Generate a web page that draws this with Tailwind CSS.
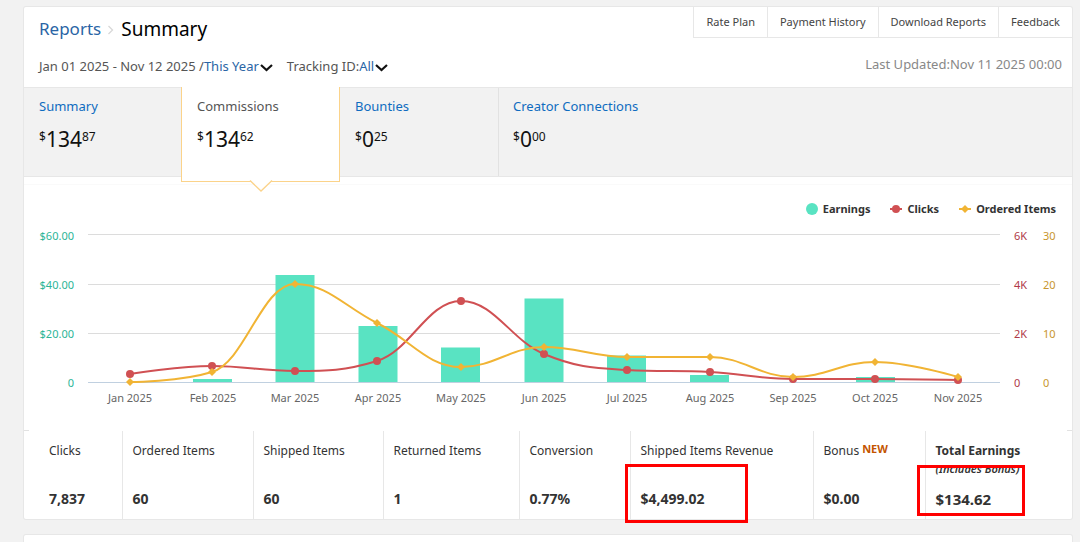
<!DOCTYPE html>
<html lang="en">
<head>
    <meta charset="UTF-8">
    <meta name="viewport" content="width=device-width, initial-scale=1.0">
    <title>Reports - Summary</title>
    <script src="https://cdn.jsdelivr.net/npm/@tailwindcss/browser@4"></script>
</head>
<body class="bg-[#f2f2f2] font-['Noto_Sans','Open_Sans',sans-serif] text-[#444] overflow-x-hidden">
  <main class="ml-6 mr-2 pt-[7px]">
    <div class="bg-white rounded-xs shadow-[0_0_0_1px_#e7e7e7]">

      <!-- Header -->
      <header class="flex justify-between h-20">
        <div class="pl-[15px] pt-2">
          <h1 class="flex items-center h-7">
            <a href="#" class="text-[17px] text-[#2a65a5]">Reports</a>
            <svg class="w-5 h-5" viewBox="0 0 20 20" fill="none" stroke="#d8d8d8" stroke-width="1.3">
              <path d="M7.5 7l4 4l-4 4"></path>
            </svg>
            <span class="text-[19px] text-black">Summary</span>
          </h1>
          <div class="flex items-center h-5 mt-3.5 text-[13px] text-[#555]">
            <span>Jan 01 2025 - Nov 12 2025 /</span>
            <button class="flex items-center text-[#2a65a5]">This Year
              <svg class="w-3.5 h-3.5" viewBox="0 0 14 14" fill="none" stroke="#111" stroke-width="2.2"><path d="M2 5l5.5 5l5.5-5"></path></svg>
            </button>
            <span class="ml-3.5">Tracking ID:</span>
            <button class="flex items-center text-[#2a65a5]">All
              <svg class="w-3.5 h-3.5" viewBox="0 0 14 14" fill="none" stroke="#111" stroke-width="2.2"><path d="M2 5l5.5 5l5.5-5"></path></svg>
            </button>
          </div>
        </div>
        <div class="flex flex-col items-end">
          <nav class="flex h-[31px] border-b border-[#e7e7e7] text-[11px] text-[#444]">
            <a href="#" class="flex items-center px-3 border-l border-[#e7e7e7]">Rate Plan</a>
            <a href="#" class="flex items-center px-3 border-l border-[#e7e7e7]">Payment History</a>
            <a href="#" class="flex items-center px-3 border-l border-[#e7e7e7]">Download Reports</a>
            <a href="#" class="flex items-center px-3 border-l border-[#e7e7e7]">Feedback</a>
          </nav>
          <p class="mt-4 mr-2.5 text-[13px] leading-5 text-[#888]">Last Updated:Nov 11 2025 00:00</p>
        </div>
      </header>

      <!-- Tabs -->
      <div class="flex h-[90px] bg-[#f2f2f2] border-y border-[#e7e7e7] text-[13px]">
        <a href="#" class="w-[157px] pl-[15px] pt-2">
          <p class="leading-5 text-[#0f6cc0]">Summary</p>
          <p class="flex mt-[9px] text-[12px] leading-6 text-[#111]"><span>$</span><span class="text-[21px] leading-7">134</span><span>87</span></p>
        </a>
        <a href="#" class="relative w-[159px] -mt-px h-[95px] pl-[15px] pt-[9px] bg-white border-x border-b border-[#fbd38a]">
          <p class="leading-5 text-[#555]">Commissions</p>
          <p class="flex mt-[9px] text-[12px] leading-6 text-[#111]"><span>$</span><span class="text-[21px] leading-7">134</span><span>62</span></p>
          <svg class="absolute left-[67px] top-[93px] w-6 h-3" viewBox="0 0 24 12" fill="#fff" stroke="#fbd38a" stroke-width="1.3">
            <path d="M1 0.5l11 10.5l11-10.5"></path>
          </svg>
        </a>
        <a href="#" class="w-[159px] pl-[15px] pt-2 border-r border-[#e2e2e2]">
          <p class="leading-5 text-[#0f6cc0]">Bounties</p>
          <p class="flex mt-[9px] text-[12px] leading-6 text-[#111]"><span>$</span><span class="text-[21px] leading-7">0</span><span>25</span></p>
        </a>
        <a href="#" class="pl-3.5 pt-2">
          <p class="leading-5 text-[#0f6cc0]">Creator Connections</p>
          <p class="flex mt-[9px] text-[12px] leading-6 text-[#111]"><span>$</span><span class="text-[21px] leading-7">0</span><span>00</span></p>
        </a>
      </div>

      <!-- Chart -->
      <section class="mt-[7px] pt-3.5 border-t border-[#fafafa]">
        <div class="flex justify-end items-center gap-5 h-5 pr-4 text-[11px] font-bold text-[#333]">
          <span class="flex items-center gap-[5px]"><svg class="w-3 h-3" viewBox="0 0 12 12"><circle cx="6" cy="6" r="6" fill="#59e3c2"></circle></svg>Earnings</span>
          <span class="flex items-center gap-[5px]"><svg class="w-3 h-3" viewBox="0 0 12 12"><path d="M0 6h12" stroke="#d05053" stroke-width="2"></path><circle cx="6" cy="6" r="4" fill="#d05053"></circle></svg>Clicks</span>
          <span class="flex items-center gap-[5px]"><svg class="w-3 h-3" viewBox="0 0 12 12"><path d="M0 6h12" stroke="#f1b434" stroke-width="2"></path><path d="M6 2l4 4l-4 4l-4-4z" fill="#f1b434"></path></svg>Ordered Items</span>
        </div>
        <svg class="block w-full" viewBox="0 0 1048 211" font-size="11">
          <g stroke="#dcdcdc">
            <path d="M64 15.5h912M64 65.5h912M64 114.5h912"></path>
          </g>
          <g fill="#59e3c2">
            <rect x="169" y="160" width="39" height="4"></rect>
            <rect x="251.5" y="56" width="39" height="108"></rect>
            <rect x="334.5" y="107" width="39" height="57"></rect>
            <rect x="417" y="128.5" width="39" height="35.5"></rect>
            <rect x="500.5" y="79.5" width="39" height="84.5"></rect>
            <rect x="583" y="136.5" width="39" height="27.5"></rect>
            <rect x="666" y="156" width="39" height="8"></rect>
            <rect x="832" y="158" width="39" height="6"></rect>
          </g>
          <path d="M64 163.5h912" stroke="#c0d0e0"></path>
          <g id="clicks" fill="#d05053" stroke="#d05053"></g>
          <g id="orders" fill="#f1b434" stroke="#f1b434"></g>
          <g fill="#2cb597" text-anchor="end">
            <text x="50" y="21">$60.00</text>
            <text x="50" y="70">$40.00</text>
            <text x="50" y="119">$20.00</text>
            <text x="50" y="168">0</text>
          </g>
          <g fill="#b03a48">
            <text x="990" y="21">6K</text>
            <text x="990" y="70">4K</text>
            <text x="990" y="119">2K</text>
            <text x="990" y="168">0</text>
          </g>
          <g fill="#c8962e">
            <text x="1019" y="21">30</text>
            <text x="1019" y="70">20</text>
            <text x="1019" y="119">10</text>
            <text x="1019" y="168">0</text>
          </g>
          <g fill="#666" text-anchor="middle">
            <text x="106" y="183">Jan 2025</text>
            <text x="189" y="183">Feb 2025</text>
            <text x="271" y="183">Mar 2025</text>
            <text x="354" y="183">Apr 2025</text>
            <text x="437" y="183">May 2025</text>
            <text x="520" y="183">Jun 2025</text>
            <text x="603" y="183">Jul 2025</text>
            <text x="686" y="183">Aug 2025</text>
            <text x="769" y="183">Sep 2025</text>
            <text x="851" y="183">Oct 2025</text>
            <text x="934" y="183">Nov 2025</text>
          </g>
        </svg>
      </section>

      <!-- Totals -->
      <div class="flex justify-between">
        <span class="w-[5px] h-px bg-[#e2e2e2]"></span>
        <span class="w-[5px] h-px bg-[#e2e2e2]"></span>
      </div>
      <table class="w-full text-left text-[12px] text-[#333]">
        <colgroup>
          <col class="w-[98px]"><col class="w-[131px]"><col class="w-[130px]"><col class="w-[136px]">
          <col class="w-[111px]"><col class="w-[183px]"><col class="w-[112px]"><col class="w-[147px]">
        </colgroup>
        <thead>
          <tr class="h-12 align-top">
            <th class="pl-[25px] pt-2.5 font-normal leading-5">Clicks</th>
            <th class="pl-2.5 pt-2.5 font-normal leading-5 border-l border-[#e7e7e7]">Ordered Items</th>
            <th class="pl-2.5 pt-2.5 font-normal leading-5 border-l border-[#e7e7e7]">Shipped Items</th>
            <th class="pl-2.5 pt-2.5 font-normal leading-5 border-l border-[#e7e7e7]">Returned Items</th>
            <th class="pl-2.5 pt-2.5 font-normal leading-5 border-l border-[#e7e7e7]">Conversion</th>
            <th class="pl-2.5 pt-2.5 font-normal leading-5 border-l border-[#e7e7e7]">Shipped Items Revenue</th>
            <th class="pl-2.5 pt-2.5 font-normal leading-5 border-l border-[#e7e7e7]">
              <span class="flex gap-[3px]">Bonus <span class="text-[11px] leading-4 font-bold text-[#c45500]">NEW</span></span>
            </th>
            <th class="pl-2.5 pt-2.5 font-bold leading-5 border-l border-[#e7e7e7]">Total Earnings
              <i class="block text-[11px] leading-4 font-semibold whitespace-nowrap">(Includes Bonus)</i>
            </th>
          </tr>
        </thead>
        <tbody>
          <tr class="h-10 align-top font-bold text-[14px]">
            <td class="pl-[25px] pt-2.5 leading-5">7,837</td>
            <td class="pl-2.5 pt-2.5 leading-5 border-l border-[#e7e7e7]">60</td>
            <td class="pl-2.5 pt-2.5 leading-5 border-l border-[#e7e7e7]">60</td>
            <td class="pl-2.5 pt-2.5 leading-5 border-l border-[#e7e7e7]">1</td>
            <td class="pl-2.5 pt-2.5 leading-5 border-l border-[#e7e7e7]">0.77%</td>
            <td class="relative pl-2.5 pt-2.5 leading-5 border-l border-[#e7e7e7]">$4,499.02
              <span class="absolute -left-1.5 -top-[15px] w-[123px] h-[59px] border-3 border-[#ff0000]"></span>
            </td>
            <td class="pl-2.5 pt-2.5 leading-5 border-l border-[#e7e7e7]">$0.00</td>
            <td class="relative pl-2.5 pt-2.5 leading-5 border-l border-[#e7e7e7] text-[15px]">$134.62
              <span class="absolute -left-[9px] -top-3.5 w-[108px] h-[51px] border-3 border-[#ff0000]"></span>
            </td>
          </tr>
        </tbody>
      </table>
    </div>

    <div class="mt-4 h-8 bg-white rounded-xs shadow-[0_0_0_1px_#e7e7e7]"></div>
  </main>

  <script>
    const months = [106, 188, 271, 353, 437, 520, 603, 686, 769, 851, 934];
    const clicks = [155, 147, 152, 142, 82, 135, 151, 153, 160, 160, 161];
    const orders = [163, 153, 65, 104, 148, 128, 138, 138, 158, 143, 158];

    // keep a control point from overshooting its two end points
    function clamp(v, a, b) {
      return Math.min(Math.max(v, Math.min(a, b)), Math.max(a, b));
    }

    function spline(ys) {
      let d = `M${months[0]} ${ys[0]}`;
      let outX = months[0], outY = ys[0];
      for (let i = 1; i < ys.length; i++) {
        const x = months[i], y = ys[i];
        let inX = x, inY = y, nextX = x, nextY = y;
        if (i < ys.length - 1) {
          inX = (1.5 * x + months[i - 1]) / 2.5;
          nextX = (1.5 * x + months[i + 1]) / 2.5;
          const slope = (ys[i + 1] - ys[i - 1]) / (months[i + 1] - months[i - 1]);
          inY = clamp(y - slope * (x - inX), ys[i - 1], y);
          nextY = 2 * y - inY;
          nextY = clamp(nextY, ys[i + 1], y);
          inY = 2 * y - nextY;
        }
        d += `C${outX} ${outY} ${inX} ${inY} ${x} ${y}`;
        outX = nextX;
        outY = nextY;
      }
      return d;
    }

    document.getElementById("clicks").innerHTML =
      `<path d="${spline(clicks)}" fill="none" stroke-width="2"/>` +
      months.map((x, i) => `<circle cx="${x}" cy="${clicks[i]}" r="4" stroke="none"/>`).join("");
    document.getElementById("orders").innerHTML =
      `<path d="${spline(orders)}" fill="none" stroke-width="2"/>` +
      months.map((x, i) => `<path d="M${x} ${orders[i] - 4}l4 4l-4 4l-4-4z" stroke="none"/>`).join("");
  </script>
</body>
</html>
